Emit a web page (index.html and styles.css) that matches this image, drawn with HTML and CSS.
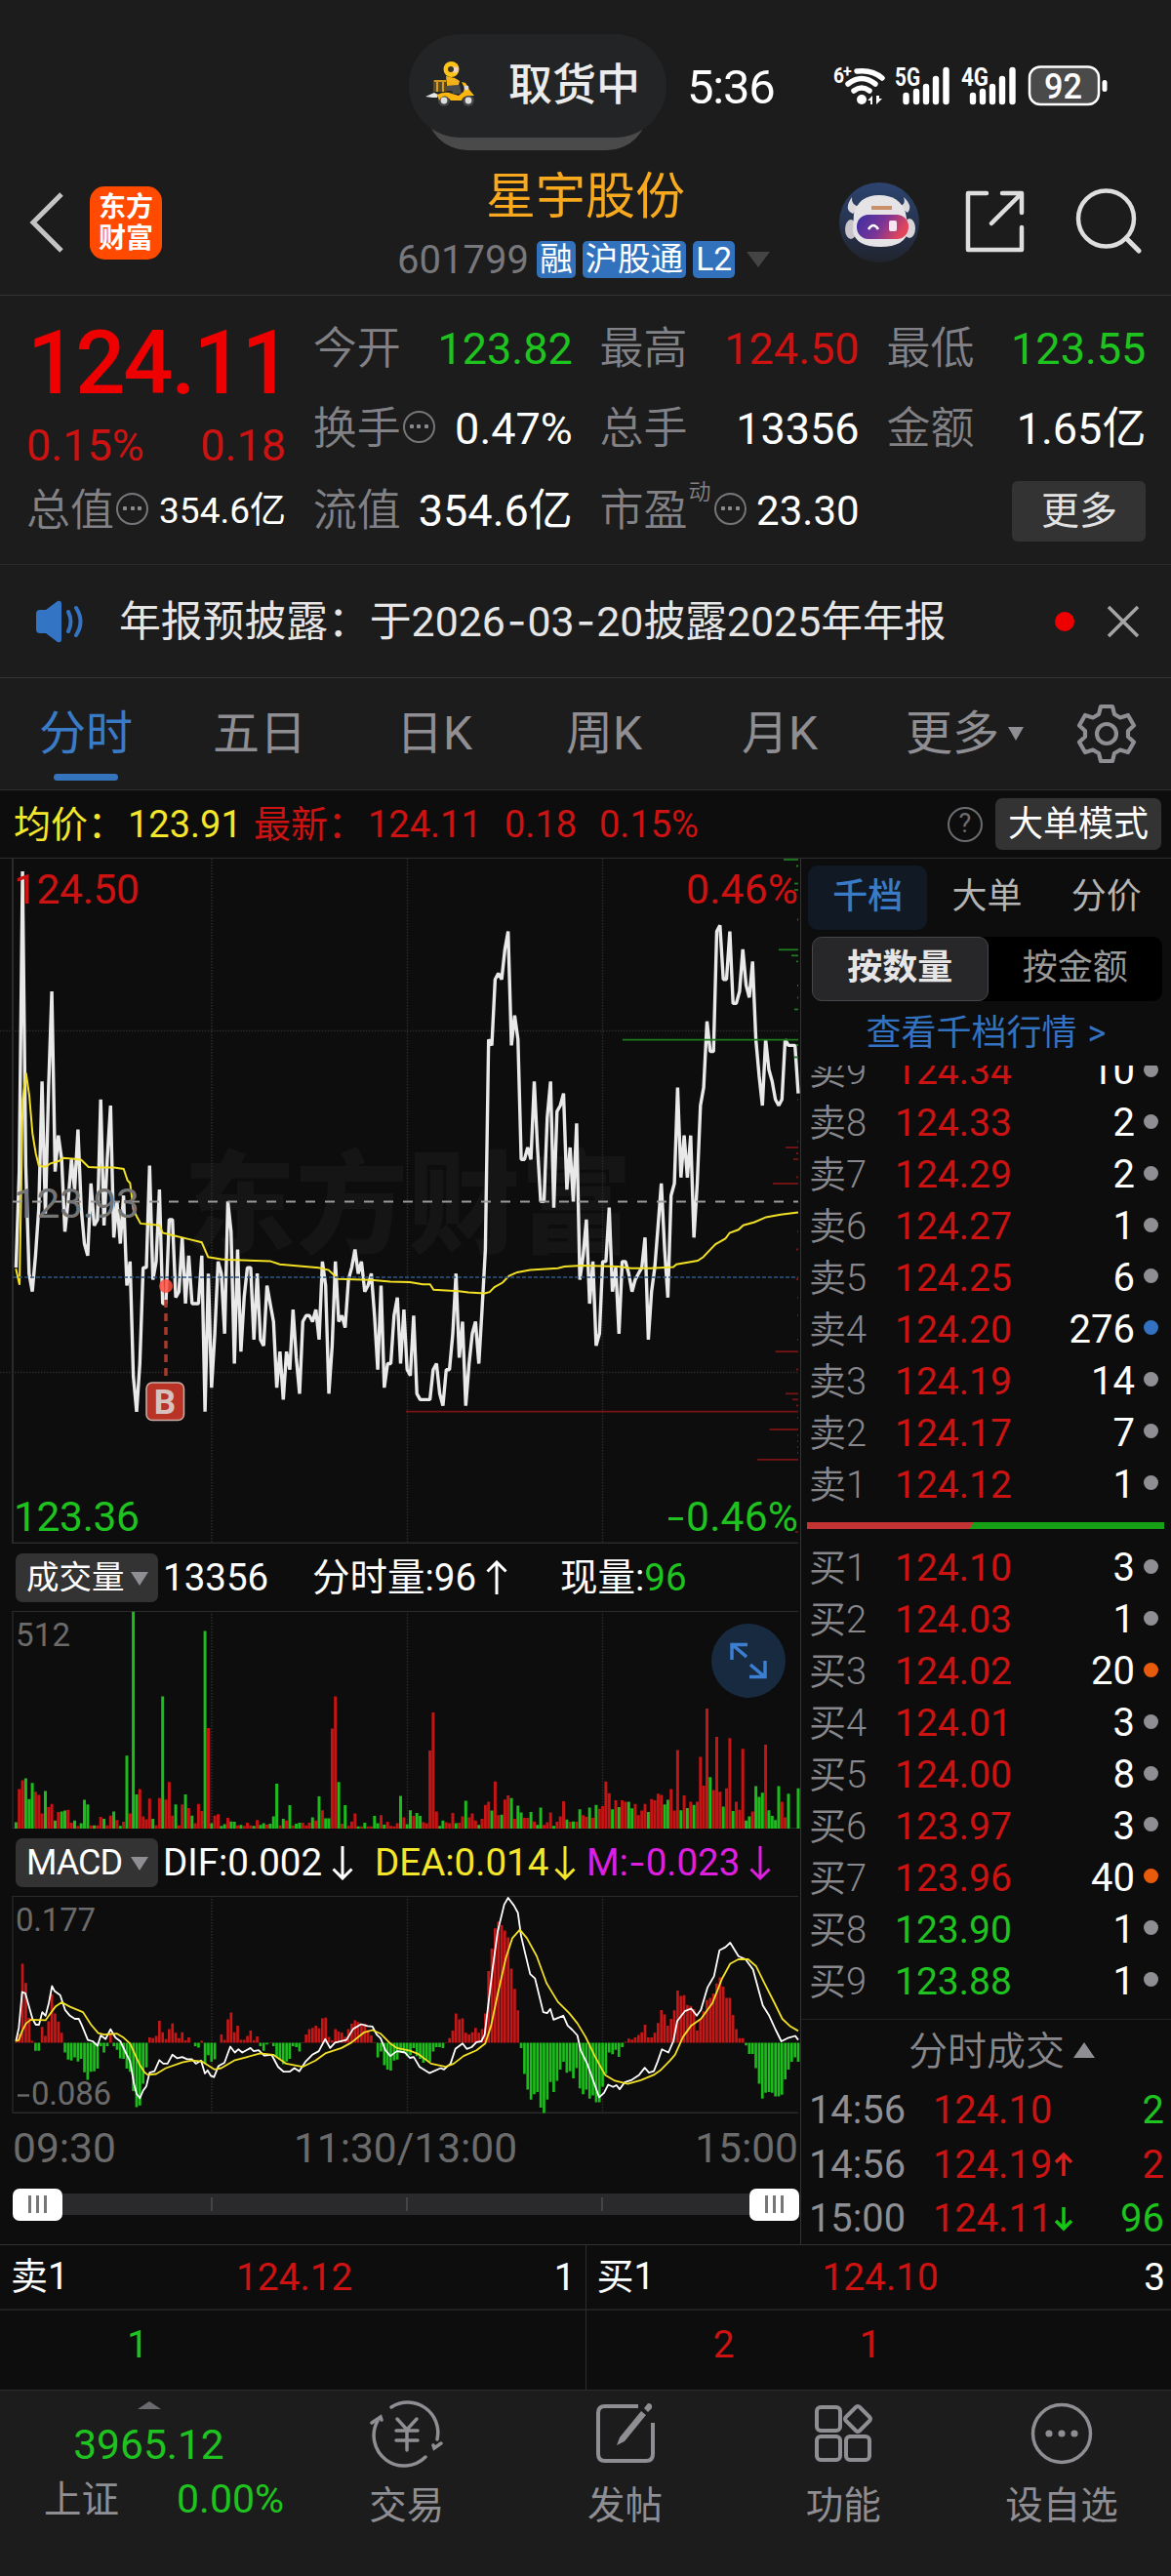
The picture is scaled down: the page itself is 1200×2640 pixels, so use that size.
FILE: index.html
```html
<!DOCTYPE html>
<html lang="zh-CN">
<head>
<meta charset="utf-8">
<title>星宇股份 601799</title>
<link rel="stylesheet" href="styles.css">
</head>
<body>
<div class="app">
  <div class="status">
    <div class="island-wrap">
      <div class="island">
        <svg class="rider" width="54" height="50" viewBox="0 0 54 50">
          <path d="M1 36 L10 32 L14 34 L13 37 L8 37 Z" fill="#e6e6e6"/>
          <rect x="9" y="19" width="13" height="12" fill="#5a4a26"/><path d="M10 20h12M13 21v10M19 21v10" stroke="#f5b31a" stroke-width="1.6"/>
          <circle cx="20" cy="40" r="6" fill="#444"/><circle cx="20" cy="40" r="3.4" fill="#ddd"/>
          <circle cx="45" cy="40" r="6" fill="#444"/><circle cx="45" cy="40" r="3.4" fill="#ddd"/>
          <path d="M13 34 Q22 30 28 33 L35 35 L40 31 L41 27 L38 21 L42 22 L46 29 L51 35 L44 35 Q39 36 38 40 L27 40 Q20 31 15 40 Z" fill="#fbb60f"/>
          <path d="M22 25 L36 24 L38 33 L29 33 L28 30 L22 30 Z" fill="#4b4b4b"/>
          <path d="M22 15 L31 17 L36 20 L35 24 L23 25 Z" fill="#f2b21a"/>
          <circle cx="27.500" cy="8" r="8" fill="#fcc419"/><path d="M27 5 L35 6 L33 12 L28 11 Z" fill="#f0d2bd"/><circle cx="27" cy="8" r="3" fill="#3a3328"/>
          <circle cx="43" cy="27" r="2.400" fill="#ddd"/>
        </svg>
        <span>取货中</span>
      </div>
    </div>
    <div class="clock">5:36</div>
    <svg class="signals" width="300" height="50" viewBox="850 64 300 50">
      <g fill="none" stroke="#fff" stroke-width="5.500" stroke-linecap="round">
        <path d="M878 73 Q894 71 904 80"/><path d="M869 86 Q883 75 897 86"/><path d="M875 93 Q883 87 891 93"/>
      </g>
      <circle cx="883" cy="102" r="5" fill="#fff"/><path d="M889 103l5-5v9h-2v-4zM898 98v9l6-6h-3v-3z" fill="#fff"/>
      <g fill="#fff" font-family="Roboto" font-weight="700">
        <text x="854" y="85" font-size="22" textLength="11" lengthAdjust="spacingAndGlyphs">6</text><text x="864" y="79" font-size="16">+</text>
        <text x="917" y="88" font-size="25" textLength="26" lengthAdjust="spacingAndGlyphs">5G</text>
        <text x="985" y="88" font-size="25" textLength="28" lengthAdjust="spacingAndGlyphs">4G</text>
      </g>
      <g stroke="#fff" stroke-width="6.400" stroke-linecap="round">
        <path d="M928.500 98v6M939 94v10M949 89v15M959 81v23M969.500 72v32"/>
        <path d="M997 98v6M1007 94v10M1017 89v15M1027 81v23M1037.500 72v32"/>
      </g>
      <rect x="1055" y="68.500" width="71" height="38.500" rx="11" fill="#4a4a4a" stroke="#fff" stroke-width="2.500"/>
      <rect x="1129.500" y="82" width="5" height="12" rx="2.500" fill="#fff"/>
      <text x="1070" y="101" font-family="Roboto" font-size="36" font-weight="500" fill="#fff" textLength="39" lengthAdjust="spacingAndGlyphs">92</text>
    </svg>
  </div>

  <header class="head">
    <svg class="back" width="40" height="64" viewBox="0 0 40 64"><path d="M36 3 L7 32 L36 61" fill="none" stroke="#c4c4c4" stroke-width="5"/></svg>
    <div class="logo"><span>东方</span><span>财富</span></div>
    <div class="title">
      <div class="name">星宇股份</div>
      <div class="code"><span class="num">601799</span><b>融</b><b>沪股通</b><b>L2</b><i class="tri"></i></div>
    </div>
    <svg class="robot" width="82" height="82" viewBox="0 0 82 82">
      <defs>
        <linearGradient id="sky" x1="0" y1="0" x2="0" y2="1"><stop offset="0" stop-color="#2d4470"/><stop offset="1" stop-color="#20242e"/></linearGradient>
        <linearGradient id="visor" x1="0" y1="0" x2="1" y2=".3"><stop offset="0" stop-color="#3a2fa4"/><stop offset=".55" stop-color="#7a3597"/><stop offset="1" stop-color="#e0455c"/></linearGradient>
      </defs>
      <circle cx="41" cy="41" r="41" fill="url(#sky)"/>
      <path d="M13 15 Q4 28 14 32 L22 25 Q12 24 13 15Z M66 15 Q76 24 70 31 L60 24 Q69 24 66 15Z" fill="#dcd9dd"/>
      <ellipse cx="12" cy="48" rx="6" ry="10" fill="#c9c6cb"/><ellipse cx="72" cy="47" rx="6" ry="10" fill="#d8d5d9"/>
      <path d="M15 32 Q20 13 41 13 Q62 13 68 31 L71 49 Q68 66 42 66 Q17 66 14 50Z" fill="#e6e3e6"/>
      <path d="M33 26h21" stroke="#c9906a" stroke-width="4"/>
      <rect x="18" y="33" width="53" height="25" rx="12" fill="url(#visor)"/>
      <path d="M30 48q5-8 10 0" fill="none" stroke="#fff" stroke-width="2.500"/><rect x="51" y="39" width="8" height="11" rx="2" fill="#f7e6f2"/>
    </svg>
    <svg class="share" width="70" height="70" viewBox="0 0 70 70"><path d="M26 6 H7 V64 H62 V41 M42 6 H62 V26 M61 7 L31 37" fill="none" stroke="#dedede" stroke-width="4.500" stroke-linecap="round" stroke-linejoin="round"/></svg>
    <svg class="search" width="70" height="70" viewBox="0 0 70 70"><circle cx="33.500" cy="32" r="28.500" fill="none" stroke="#dedede" stroke-width="4.500"/><path d="M54 52 L67 65" stroke="#dedede" stroke-width="5" stroke-linecap="round"/></svg>
  </header>

  <section class="quote">
    <div class="lead">
      <div class="price">124.11</div>
      <div class="pair red"><span>0.15%</span><span>0.18</span></div>
    </div>
    <div class="cell c2 r1"><span>今开</span><em class="green">123.82</em></div>
    <div class="cell c3 r1"><span>最高</span><em class="red">124.50</em></div>
    <div class="cell c4 r1"><span>最低</span><em class="green">123.55</em></div>
    <div class="cell c2 r2"><span>换手</span><i class="more"></i><em>0.47%</em></div>
    <div class="cell c3 r2"><span>总手</span><em>13356</em></div>
    <div class="cell c4 r2"><span>金额</span><em>1.65亿</em></div>
    <div class="cell c1 r3"><span>总值</span><i class="more"></i><em class="s37">354.6亿</em></div>
    <div class="cell c2 r3"><span>流值</span><em>354.6亿</em></div>
    <div class="cell c3 r3"><span>市盈</span><sup>动</sup><i class="more"></i><em class="s42">23.30</em></div>
    <div class="cell c4 r3"><button class="btn-more">更多</button></div>
  </section>

  <section class="notice">
    <svg width="50" height="44" viewBox="0 0 50 44"><path d="M0 14 Q0 10 4 10 H10 L22 1 Q26 0 26 4 V40 Q26 44 22 43 L10 34 H4 Q0 34 0 30Z" fill="#3474c4"/><path d="M33 12 Q38 22 33 32 M41 8 Q50 22 41 36" fill="none" stroke="#3474c4" stroke-width="4" stroke-linecap="round"/></svg>
    <p>年报预披露：于2026<span class="dash">-</span>03<span class="dash">-</span>20披露2025年年报</p>
    <i class="dot"></i>
    <svg class="close" width="34" height="34" viewBox="0 0 34 34"><path d="M2 2 L32 32 M32 2 L2 32" stroke="#a5a5a5" stroke-width="3.500"/></svg>
  </section>

  <nav class="tabs">
    <span class="on">分时</span><span>五日</span><span>日K</span><span>周K</span><span>月K</span><span>更多<i class="tri"></i></span>
    <svg width="62" height="62" viewBox="0 0 62 62"><g fill="none" stroke="#8e8e93" stroke-width="4.200" stroke-linejoin="round"><path d="M25 3 H37 L39 11 L45 14.500 L53 12 L59 22.500 L53 28 V34 L59 39.500 L53 50 L45 47.500 L39 51 L37 59 H25 L23 51 L17 47.500 L9 50 L3 39.500 L9 34 V28 L3 22.500 L9 12 L17 14.500 L23 11Z"/><circle cx="31" cy="31" r="10"/></g></svg>
  </nav>

  <div class="avg">
    <span class="yellow k">均价：</span><span class="yellow v1">123.91</span><span class="red k">最新：</span><span class="red v2">124.11</span><span class="red v3">0.18</span><span class="red v4">0.15%</span>
    <i class="help">?</i><button>大单模式</button>
  </div>

  <main class="main">
    <div class="charts">
      <svg class="price-chart" width="820" height="702" viewBox="0 880 820 702">
        <text x="188" y="1275" class="mark" textLength="460" lengthAdjust="spacingAndGlyphs">东方财富</text>
        <path d="M0 1056.500H818M0 1406.500H818" class="grid"/>
        <path d="M217 880V1582M417.500 880V1582M617.500 880V1582" class="grid"/>
        <path d="M13 880V1581.500H818" class="frame"/>
        <path id="price-line" class="price-line"/>
        <path id="avg-line" class="avg-line"/>
        <path d="M13 1231.500H818" stroke="#9a9a9a" stroke-width="1.800" stroke-dasharray="10 10"/>
        <path d="M13 1309H818" stroke="#2f5688" stroke-width="1.500" stroke-dasharray="4 2"/>
        <g id="levels"></g>
        <path d="M170 1332V1416" stroke="#a8392f" stroke-width="3.500" stroke-dasharray="8 6"/>
        <circle cx="170" cy="1318" r="7" fill="#ff5040" opacity=".85"/>
        <rect x="150" y="1417" width="38.500" height="38.500" rx="6" fill="#b93426" stroke="#cbb0aa" stroke-width="1.500"/>
        <text x="169" y="1449" class="bmark" text-anchor="middle">B</text>
        <text x="14" y="926" class="t42 fr" textLength="129">124.50</text>
        <text x="14" y="1569" class="t42 fg" textLength="129">123.36</text>
        <text x="14" y="1248" class="t42 fx" textLength="129">123.93</text>
        <text x="818" y="926" class="t42 fr" text-anchor="end" textLength="115">0.46%</text>
        <text x="818" y="1569" class="t42 fg" text-anchor="end" textLength="115">0.46%</text><path d="M685 1556.500h15" stroke="#1fc31f" stroke-width="3"/>
      </svg>
      <div class="ind"><button>成交量<i class="tri"></i></button><span class="a1">13356</span><span class="a2">分时量:96<svg width="22" height="36" viewBox="0 0 22 36"><path d="M11 35V2M1.500 11.500L11 2L20.500 11.500" /></svg></span><span class="a3">现量:<b class="green">96</b></span></div>
      <div class="panel">
        <svg width="820" height="223" viewBox="0 1651 820 223">
          <path d="M13 1874V1651.500H818" class="frame thin"/><path d="M13 1873.500H818" class="frame thin"/>
          <path d="M217 1651V1874M417.500 1651V1874M617.500 1651V1874" class="grid"/>
          <path id="vol-up" fill="#c41414"/><path id="vol-down" fill="#1cbc1c"/>
          <text x="16" y="1687" class="t33" textLength="56">512</text>
        </svg>
        <div class="expand"><svg width="40" height="40" viewBox="0 0 40 40"><path d="M3 19V3.500H19M4 4L18 16M22 24L36 36M37 20V36.500H21" fill="none" stroke="#3c7fd0" stroke-width="3.500"/></svg></div>
      </div>
      <div class="ind macd"><button>MACD<i class="tri"></i></button><span class="a1">DIF:0.002<svg width="22" height="36" viewBox="0 0 22 36"><path d="M11 1V34M1.500 24.500L11 34L20.500 24.500"/></svg></span><span class="b2 yellow">DEA:0.014<svg width="22" height="36" viewBox="0 0 22 36"><path d="M11 1V34M1.500 24.500L11 34L20.500 24.500"/></svg></span><span class="b3">M:<span class="dash">-</span>0.023<svg width="22" height="36" viewBox="0 0 22 36"><path d="M11 1V34M1.500 24.500L11 34L20.500 24.500"/></svg></span></div>
      <svg width="820" height="223" viewBox="0 1943 820 223">
        <path d="M13 2166V1943.500H818" class="frame thin"/><path d="M13 2165.500H818" class="frame"/>
        <path d="M217 1943V2166M417.500 1943V2166M617.500 1943V2166" class="grid"/>
        <path id="macd-up" fill="#c41818"/><path id="macd-down" fill="#1cbc1c"/>
        <path id="dif" class="thinline" stroke="#fff"/><path id="dea" class="thinline" stroke="#f2e024"/>
        <text x="16" y="1979" class="t33" textLength="82">0.177</text>
        <path d="M18 2147.500h12" stroke="#6b6b6b" stroke-width="2.400"/><text x="32" y="2157" class="t33" textLength="82">0.086</text>
      </svg>
      <div class="times"><span>09:30</span><span>11:30/13:00</span><span>15:00</span></div>
      <div class="slider"><i class="knob"><u></u><u></u><u></u></i><i class="track"><s></s><s></s><s></s></i><i class="knob"><u></u><u></u><u></u></i></div>
    </div>

    <aside class="book">
      <div class="btabs"><span class="on">千档</span><span>大单</span><span>分价</span></div>
      <div class="seg"><span class="on">按数量</span><span>按金额</span></div>
      <div class="link">查看千档行情 &gt;</div>
      <div class="rows asks">
        <div class="row"><span>卖9</span><em>124.34</em><b>10</b><i></i></div>
        <div class="row"><span>卖8</span><em>124.33</em><b>2</b><i></i></div>
        <div class="row"><span>卖7</span><em>124.29</em><b>2</b><i></i></div>
        <div class="row"><span>卖6</span><em>124.27</em><b>1</b><i></i></div>
        <div class="row"><span>卖5</span><em>124.25</em><b>6</b><i></i></div>
        <div class="row"><span>卖4</span><em>124.20</em><b>276</b><i class="blue"></i></div>
        <div class="row"><span>卖3</span><em>124.19</em><b>14</b><i></i></div>
        <div class="row"><span>卖2</span><em>124.17</em><b>7</b><i></i></div>
        <div class="row"><span>卖1</span><em>124.12</em><b>1</b><i></i></div>
      </div>
      <div class="ratio"></div>
      <div class="rows">
        <div class="row"><span>买1</span><em>124.10</em><b>3</b><i></i></div>
        <div class="row"><span>买2</span><em>124.03</em><b>1</b><i></i></div>
        <div class="row"><span>买3</span><em>124.02</em><b>20</b><i class="orange"></i></div>
        <div class="row"><span>买4</span><em>124.01</em><b>3</b><i></i></div>
        <div class="row"><span>买5</span><em>124.00</em><b>8</b><i></i></div>
        <div class="row"><span>买6</span><em>123.97</em><b>3</b><i></i></div>
        <div class="row"><span>买7</span><em>123.96</em><b>40</b><i class="orange"></i></div>
        <div class="row"><span>买8</span><em class="green">123.90</em><b>1</b><i></i></div>
        <div class="row"><span>买9</span><em class="green">123.88</em><b>1</b><i></i></div>
      </div>
      <div class="deals">
        <div class="dh">分时成交<i></i></div>
        <div class="deal"><span>14:56</span><em>124.10</em><b class="green">2</b></div>
        <div class="deal"><span>14:56</span><em>124.19<svg width="18" height="26" viewBox="0 0 18 26"><path d="M9 25V3M1 11L9 3L17 11" fill="none" stroke="#e01f1f" stroke-width="3.500"/></svg></em><b class="red">2</b></div>
        <div class="deal"><span>15:00</span><em>124.11<svg width="18" height="26" viewBox="0 0 18 26"><path d="M9 1V23M1 15L9 23L17 15" fill="none" stroke="#14c814" stroke-width="3.500"/></svg></em><b class="green">96</b></div>
      </div>
    </aside>
  </main>

  <section class="depth">
    <div class="side"><div class="top"><span>卖1</span><em>124.12</em><b>1</b></div><div class="queue green"><span>1</span></div></div>
    <div class="side"><div class="top"><span>买1</span><em>124.10</em><b>3</b></div><div class="queue red"><span>2</span><span>1</span></div></div>
  </section>

  <footer class="foot">
    <div class="index"><i class="up"></i><div class="val">3965.12</div><div class="sub"><span>上证</span><em>0.00%</em></div></div>
    <div class="item"><svg width="76" height="70" viewBox="0 0 76 70"><g fill="none" stroke="#8e8e93" stroke-width="3.500" stroke-linecap="round"><path d="M22 8 A31 31 0 0 1 69 41"/><path d="M57 59 A31 31 0 0 1 8 22"/><path d="M2 24 L11 18 L12 21 M73 45 L66 50 L65 47"/><path d="M28 20 L38 31 L48 20 M38 31 V52 M27 32H49M27 42H49"/></g></svg><span>交易</span></div>
    <div class="item"><svg width="76" height="70" viewBox="0 0 76 70"><g fill="none" stroke="#8e8e93" stroke-width="4"><path d="M51 7 H17 Q10 7 10 14 V56 Q10 63 17 63 H59 Q66 63 66 56 V24"/><path d="M29 47 L32 39 L54 12 L59 16 L37 43Z M57 9 L61 4 Q66 4 65 9 L61 13Z" fill="#8e8e93" stroke="none"/></g></svg><span>发帖</span></div>
    <div class="item"><svg width="76" height="70" viewBox="0 0 76 70"><g fill="none" stroke="#8e8e93" stroke-width="4"><rect x="11" y="8" width="24" height="24" rx="4"/><rect x="11" y="38" width="24" height="24" rx="4"/><rect x="41" y="38" width="24" height="24" rx="4"/><path d="M51 8 Q53 6 55 8 L65 18 Q67 20 65 22 L55 32 Q53 34 51 32 L41 22 Q39 20 41 18Z"/></g></svg><span>功能</span></div>
    <div class="item"><svg width="76" height="70" viewBox="0 0 76 70"><circle cx="38" cy="35" r="29.500" fill="none" stroke="#8e8e93" stroke-width="3.500"/><g fill="#8e8e93"><circle cx="25" cy="35" r="3.600"/><circle cx="38" cy="35" r="3.600"/><circle cx="51" cy="35" r="3.600"/></g></svg><span>设自选</span></div>
  </footer>
</div>
<script src="charts.js"></script>
</body>
</html>
```
FILE: styles.css
```css
* { box-sizing: border-box; margin: 0; padding: 0; }
body { background: #1c1c1c; color: #fff; font-family: Roboto, "Noto Sans CJK SC", sans-serif; }
em, i { font-style: normal; }
i, s, u { display: block; text-decoration: none; }
button { border: 0; color: #fff; font-family: inherit; }
svg { flex: none; display: block; }
.app { width: 1200px; height: 2640px; overflow: hidden; white-space: nowrap; }
.red { color: #cd1212; }
.green { color: #1fc31f; }
.yellow { color: #f4e62a; }
.dash { font-family: Inter, sans-serif; }
.tri { width: 0; height: 0; border-style: solid; border-color: #8e8e93 transparent transparent; }

.status { height: 154px; padding: 35px 0 0 419px; display: flex; }
.island-wrap { width: 264px; height: 119px; position: relative; }
.island-wrap::before { content: ""; position: absolute; left: 18px; right: 19px; bottom: 0; height: 84px; border-radius: 42px; background: #4a4a4a; }
.island { position: relative; height: 106px; border-radius: 53px; background: #232426; display: flex; align-items: center; padding-left: 16px; font-size: 45px; font-weight: 500; color: #ececec; }
.island span { margin-left: 32px; line-height: 110px; }
.clock { width: 92px; margin-left: 21px; font-size: 49px; line-height: 110px; letter-spacing: -1.200px; }
.signals { margin: 29px 0 0 54px; }

.head { height: 149px; border-bottom: 1px solid #343434; display: flex; align-items: flex-start; }
.back { margin: 42px 0 0 27px; }
.logo { margin: 37px 0 0 25px; width: 74px; height: 75px; border-radius: 15px; background: #ff4a00; display: flex; flex-direction: column; align-items: center; justify-content: center; font-size: 28px; line-height: 32px; font-weight: 700; }
.title { margin-left: 241px; width: 382px; }
.name { padding-left: 91px; margin-top: 17px; font-size: 51px; line-height: 62px; color: #f8a91d; }
.code { display: flex; align-items: center; height: 38px; margin-top: 14px; }
.code .num { width: 144px; color: #77777c; font-size: 40px; }
.code b { height: 38px; margin-right: 7px; padding: 0 3px; border-radius: 5px; background: #3272bd; font-size: 33.500px; line-height: 38px; font-weight: 400; }
.code .tri { border-width: 16px 12px 0; border-top-color: #444; margin-left: 5px; }
.robot { margin: 33px 0 0 71px; }
.share { margin: 38px 0 0 43px; }
.search { margin: 38px 0 0 45px; }

.quote { height: 276px; border-bottom: 1px solid #2a2a2a; padding: 14px 26px 0 27px; display: grid; grid-template: 82px 84px 82px / 266px 266px 266px 266px; column-gap: 27.800px; font-size: 45px; }
.lead { grid-area: 1 / 1 / 3 / 2; }
.price { height: 110px; padding-left: 1px; font-size: 90px; line-height: 112px; font-weight: 500; color: #ef0000; letter-spacing: -2px; }
.pair { display: flex; justify-content: space-between; line-height: 60px; }
.cell { display: flex; align-items: center; height: 82px; line-height: 86px; }
.cell span, .cell sup { color: #828286; font-weight: 350; }
.cell em { margin-left: auto; }
.c1 { grid-column: 1; } .c2 { grid-column: 2; } .c3 { grid-column: 3; } .c4 { grid-column: 4; }
.r1 { grid-row: 1; } .r2 { grid-row: 2; } .r3 { grid-row: 3; }
.cell sup { font-size: 23px; align-self: flex-start; line-height: 30px; margin: 7px 1px 0 1px; }
.cell .more { width: 33px; height: 33px; margin: -6px 0 0 2px; border: 2px solid #76767a; border-radius: 50%; background: radial-gradient(circle, #8a8a8e 2px, transparent 2.500px) center / 8px 8px no-repeat, radial-gradient(circle, #8a8a8e 2px, transparent 2.500px) 3px 50% / 8px 8px no-repeat, radial-gradient(circle, #8a8a8e 2px, transparent 2.500px) 18px 50% / 8px 8px no-repeat; }
.cell .s37 { font-size: 37px; }
.cell .s42 { font-size: 42px; }
.btn-more { width: 137px; height: 62px; margin-left: auto; border-radius: 6px; background: #333; color: #e2e2e2; font-size: 39px; line-height: 58px; }

.notice { height: 116px; border-bottom: 1px solid #343434; padding: 0 32px 0 37px; display: flex; align-items: center; color: #e6e6e6; font-size: 42.800px; }
.notice p { width: 920px; margin-left: 35px; line-height: 112px; }
.notice p .dash { margin: 0 1px 0 2px; }
.notice .dot { width: 20px; height: 20px; margin-left: 39px; border-radius: 50%; background: #ee0000; }
.notice .close { margin-left: auto; }

.tabs { height: 115px; border-bottom: 1px solid #2e2e2e; display: flex; align-items: center; padding-left: 40px; color: #8e8e93; font-size: 48px; line-height: 116px; }
.tabs span { width: 178px; flex: none; position: relative; }
.tabs span:nth-child(2) { width: 188px; }
.tabs span:nth-child(3) { width: 174px; }
.tabs span:nth-child(4) { width: 180px; }
.tabs span:nth-child(5) { width: 168px; }
.tabs .on { color: #3a7bc8; }
.tabs .on::after { content: ""; position: absolute; left: 15px; bottom: 10px; width: 66px; height: 7px; border-radius: 4px; background: #3474bc; }
.tabs span:nth-child(6) { display: flex; align-items: center; width: 175px; }
.tabs .tri { border-width: 14px 8px 0; margin-left: 9px; }

.avg { height: 70px; border-bottom: 1px solid #2c2c2c; background: #0d0d0d; display: flex; align-items: center; padding: 0 10px 0 14px; font-size: 38px; line-height: 68px; }
.avg .k { width: 117px; }
.avg .v1 { width: 129px; }
.avg .v2 { width: 140px; }
.avg .v3 { width: 97px; }
.avg .help { width: 36px; height: 36px; margin-left: auto; margin-right: 13px; border: 2.500px solid #6c6c70; border-radius: 50%; color: #6c6c70; text-align: center; font-size: 27px; line-height: 31px; }
.avg button { width: 170px; height: 53px; border-radius: 7px; background: #333; font-size: 36px; line-height: 52px; }

.main { height: 1420px; background: #0d0d0d; display: flex; }
.charts { width: 820px; flex: none; }
.grid { fill: none; stroke: #2b2b2b; stroke-width: 1.500; stroke-dasharray: 1.500 1.500; }
.frame { fill: none; stroke: #2b2b2b; stroke-width: 2; }
.thin { stroke-width: 1.200; }
.mark { font: 900 114px "Noto Sans CJK SC"; fill: #151515; }
.price-line { fill: none; stroke: #e9e9e9; stroke-width: 3.400; stroke-linejoin: bevel; }
.avg-line { fill: none; stroke: #f2e024; stroke-width: 2; }
.thinline { fill: none; stroke-width: 1.800; stroke-linejoin: round; }
.t42 { font-size: 42.500px; }
.t33 { font-size: 33px; fill: #6b6b6b; }
.fr { fill: #cd1212; } .fg { fill: #1fc31f; } .fx { fill: #757575; }
.bmark { font: 700 35px Roboto; fill: #d8c2bf; }
.ind { height: 69px; display: flex; align-items: center; padding-left: 16px; font-size: 38.500px; line-height: 71px; }
.ind button { width: 146px; height: 50px; margin-right: 5px; padding-left: 11px; border-radius: 7px; background: #333; display: flex; align-items: center; font-size: 33.500px; line-height: 46px; }
.ind .tri { border-width: 14px 9px 0; margin: 2px 10px 0 auto; }
.macd button { font-size: 36px; letter-spacing: -1px; }
.ind span { display: flex; align-items: center; flex: none; }
.ind svg { margin-left: 10px; }
.ind svg path { fill: none; stroke: currentColor; stroke-width: 3; }
.ind b { font-weight: 400; }
.ind .a1 { width: 153px; }
.ind .a2 { width: 254px; }
.macd .a1 { width: 217px; }
.macd .b2 { width: 217px; }
.macd .b2 svg { margin-left: 6px; }
.macd .b3 { color: #df1fdf; }
.panel { position: relative; }
.expand { position: absolute; left: 729px; top: 13px; width: 76px; height: 76px; border-radius: 50%; background: #182a40; display: flex; align-items: center; justify-content: center; }
.times { height: 70px; display: flex; justify-content: space-between; padding: 0 2px 0 13px; font-size: 42.500px; line-height: 71px; color: #6b6b6b; }
.slider { height: 46px; margin-left: 13px; width: 806px; display: flex; align-items: center; }
.knob { width: 51px; height: 33px; border-radius: 7px; background: #fff; display: flex; align-items: center; justify-content: center; gap: 5px; }
.knob u { width: 3px; height: 18px; background: #777; }
.track { flex: 1; height: 22px; background: #2a2a2c; display: flex; align-items: center; justify-content: space-between; padding: 0 150px 0 152px; }
.track s { width: 2px; height: 14px; background: #444; }

.book { width: 380px; border-left: 1.500px solid #333; }
.btabs { height: 66px; margin: 7px 5px 0 7px; display: flex; font-size: 36px; line-height: 65px; color: #b4b4b4; text-align: center; }
.btabs span { flex: 1; }
.btabs .on { background: #111a24; border-radius: 10px; color: #3a7bc8; font-weight: 500; }
.seg { height: 66px; margin: 7px 9px 0 11px; background: #000; border-radius: 10px; display: flex; font-size: 36px; line-height: 65px; color: #999; text-align: center; }
.seg span { flex: 1; }
.seg .on { border: 1.500px solid #47474b; border-radius: 10px; background: #27272a; color: #e6e6e6; font-weight: 700; line-height: 62px; }
.link { height: 66px; line-height: 67px; text-align: center; color: #3272c0; font-size: 36px; word-spacing: 2px; }
.rows { height: 486px; }
.asks { height: 468px; overflow: hidden; display: flex; flex-direction: column; justify-content: flex-end; padding-bottom: 12px; }
.row { height: 52.900px; flex: none; display: flex; align-items: center; padding: 0 13px 0 8px; font-size: 39px; line-height: 54px; }
.row span { width: 88px; color: #88888c; font-weight: 350; font-size: 38px; }
.row em { width: 120px; color: #cd1212; }
.row em.green { color: #1fc31f; }
.row b, .deal b { margin-left: auto; font-weight: 400; font-size: 40px; }
.row i { width: 15px; height: 15px; margin: -4px 0 0 9px; border-radius: 50%; background: #8e8e93; }
.row .blue { background: #3272c0; }
.row .orange { background: #e85a0c; }
.ratio { height: 7px; margin: 0 7px 14px 6px; background: linear-gradient(120deg, #c33333 46%, #16a016 46.300%); }
.deals { margin-top: 2px; border-top: 1px solid #232325; }
.dh { height: 65px; display: flex; align-items: center; padding-left: 110px; font-size: 40px; line-height: 60px; color: #88888c; font-weight: 350; }
.dh i { border: solid transparent; border-width: 0 11.500px 16px; border-bottom-color: #8e8e93; margin-left: 9px; margin-top: -4px; }
.deal { height: 55.500px; display: flex; align-items: center; padding: 0 7px 0 8px; font-size: 39.800px; line-height: 55px; }
.deal span { width: 127px; color: #8e8e93; }
.deal em { display: flex; align-items: center; color: #cd1212; }
.deal svg { margin-left: 3px; }

.depth { height: 150px; border-top: 1.500px solid #333; border-bottom: 1.500px solid #2c2c2c; background: #0d0d0d; display: flex; font-size: 38.800px; }
.side { flex: 1; }
.side + .side { border-left: 1px solid #2c2c2c; }
.top { height: 67px; padding: 0 10px 0 11px; border-bottom: 2px solid #202020; display: flex; align-items: center; line-height: 69px; }
.side + .side .top { padding-right: 6px; }
.top span { width: 231px; font-size: 38px; }
.top em { color: #cd1212; }
.top b { margin-left: auto; font-weight: 400; }
.queue { display: flex; line-height: 70px; }
.queue span { width: 150px; text-align: right; }
.queue span:first-child { width: 152px; }

.foot { height: 190px; display: flex; color: #8e8e93; font-size: 38.500px; }
.index { width: 305px; padding-top: 11px; display: flex; flex-direction: column; align-items: center; }
.up { border: solid transparent; border-width: 0 12px 8px; border-bottom-color: #6b6b6f; }
.val { height: 60px; margin-top: 6px; line-height: 62px; font-size: 42.500px; color: #1fc31f; }
.sub { display: flex; width: 246px; margin-left: 31px; justify-content: space-between; line-height: 53px; }
.sub em { color: #1fc31f; font-size: 41px; }
.item { width: 223.750px; padding-top: 9px; display: flex; flex-direction: column; align-items: center; }
.item span { line-height: 77px; }
```
FILE: charts.js
```js
// Minute series for the session: 241 points from 09:30 to 15:00.
const X0 = 16.4, STEP = 3.34, K = 2.1778;
const xAt = i => (X0 + i * STEP).toFixed(1);

// Last price, in cents relative to the previous close.
const price = [-11,5,55,6,-12,-15,-9,-1,20,-2,19,35,5,11,7,-5,0,7,2,12,-1,-7,-9,3,-4,-3,17,-4,7,16,-6,0,-7,1,-14,-10,-29,-35,-27,-11,
-11,6,-13,-10,2,-17,-17,-3,-3,-16,-15,-6,-17,-9,-17,-17,-17,-9,-35,-12,-31,-22,-10,-12,-22,0,-5,-27,-8,-25,-16,-11,-11,-23,-12,-23,-24,-14,-17,-20,
-31,-25,-33,-25,-28,-18,-26,-32,-20,-19,-19,-20,-18,-23,-10,-14,-32,-24,-10,-20,-19,-21,-13,-11,-8,-12,-10,-15,-14,-12,-19,-28,-14,-31,-27,-27,-19,-16,-27,-18,
-28,-29,-19,-32,-33,-33,-33,-33,-28,-27,-32,-34,-28,-28,-22,-12,-26,-20,-34,-27,-22,-20,-27,-18,-8,27,26,37,38,37,42,45,26,31,27,7,7,9,7,20,
9,0,0,14,20,-1,15,16,18,2,9,0,13,-13,-9,-3,-17,-10,-24,-22,-10,-10,-1,-15,-11,-22,-10,-10,-12,-15,-13,-12,-11,-6,-23,-15,-11,-4,3,-8,
-16,1,3,19,4,11,4,11,-6,3,16,19,30,25,25,45,46,37,37,45,33,33,35,42,36,34,40,27,21,16,27,22,20,17,16,17,27,26,26,26,18];

// Traded volume per minute; positive = up minute, negative = down minute.
const volume = [-14,88,108,-112,-66,-102,82,75,34,-84,48,55,-18,37,-38,-40,42,13,-18,6,-12,-64,-54,7,-7,7,26,-22,7,29,-38,19,-6,15,-163,34,-484,-76,88,27,
21,67,-22,7,68,-295,65,104,29,-54,7,54,-76,46,-29,12,55,39,-441,224,-12,29,32,-6,-10,24,-16,-15,7,-8,6,13,7,-6,19,-8,-12,9,-11,-27,
-100,7,-22,18,-52,7,-11,-13,13,7,13,-25,18,-72,41,-23,-23,223,295,-104,11,-52,6,16,34,-5,5,-13,5,5,-28,-12,30,-9,15,6,5,12,-73,25,
-10,-41,28,-35,-28,14,12,174,259,38,-6,-18,14,12,35,-12,13,27,-62,25,34,18,-8,22,53,60,-40,105,30,-31,65,74,-68,22,-51,-36,24,24,-37,16,
-8,-47,8,14,36,-6,15,27,61,-20,15,-16,15,-43,30,26,-47,24,-53,44,50,105,79,-43,63,-48,63,60,-60,-45,55,30,40,55,-37,66,63,78,75,-54,
-64,88,40,175,-41,74,-46,60,-53,60,160,96,268,-115,86,205,82,-49,90,202,-39,60,42,178,-18,-27,38,-95,-71,-80,187,-41,-28,-19,-95,60,25,-78,0,0,-90];

// MACD histogram.
const macd = [2,20,176,133,55,4,-18,-18,35,15,48,108,65,47,22,-22,-38,-40,-33,-42,-36,-66,-83,-65,-64,-58,-8,-22,-8,22,-8,-16,-35,-36,-58,-65,-108,-144,-140,-92,
-55,12,10,15,49,23,8,30,43,22,10,23,5,12,0,-8,-11,4,-46,-28,-43,-37,0,18,6,52,67,23,38,6,6,15,27,5,14,-8,-18,-4,1,-8,
-32,-38,-48,-42,-36,-8,-10,-20,1,18,30,33,38,32,54,56,13,5,30,25,22,13,30,42,50,46,42,42,28,16,1,-33,-20,-50,-60,-62,-40,-38,-20,-22,
-30,-28,-12,-30,-36,-45,-40,-43,-20,-10,-10,-12,1,10,27,65,52,54,22,18,23,33,22,30,65,160,210,255,270,262,250,235,165,120,72,-12,-70,-105,-127,-115,
-110,-145,-157,-127,-88,-110,-85,-60,-43,-67,-64,-80,-57,-102,-115,-105,-125,-118,-133,-133,-98,-70,-22,-26,-16,-32,-10,2,9,7,12,17,23,40,12,12,22,44,73,63,
38,53,72,116,104,106,84,82,75,27,52,70,95,100,110,132,146,125,100,100,62,30,10,10,-6,-25,-25,-57,-92,-125,-112,-110,-112,-120,-120,-116,-82,-60,-43,-33,-43];

// Smooth lines as x,y samples.
const avg = [49,937,60,973,70,560,80,500,90,550,100,635,110,680,119,706,130,709,142,709,155,702,180,697,195,690,230,692,250,694,272,710,300,711,350,711,380,714,392,740,400,746,410,805,420,820,432,836,490,840,500,857,540,864,580,871,620,878,640,911,680,916,700,917,830,920,860,927,980,935,1010,940,1040,960,1140,962,1200,966,1260,967,1300,972,1322,972,1333,984,1410,987,1440,990,1490,992,1505,989,1520,978,1545,968,1565,953,1590,945,1630,940,1715,936,1735,932,1790,930,1900,932,1940,936,2000,936,2070,933,2080,927,2145,919,2162,911,2180,897,2200,882,2230,870,2243,857,2270,850,2285,840,2320,833,2355,822,2400,816,2454,811];
const dif = [49,1115,58,1085,68,1005,78,1008,100,1065,110,1078,120,1078,130,1050,140,1058,150,1030,160,992,168,1003,185,1012,200,1045,215,1058,230,1065,242,1065,252,1080,270,1112,285,1115,300,1125,310,1102,325,1110,340,1088,355,1107,370,1115,385,1138,400,1160,412,1210,420,1232,430,1242,440,1225,450,1215,460,1185,475,1182,490,1157,502,1165,515,1165,530,1145,545,1153,560,1150,575,1155,590,1155,602,1165,618,1158,630,1187,638,1180,648,1192,658,1195,672,1170,690,1163,708,1127,722,1140,733,1133,745,1140,770,1130,780,1137,795,1135,812,1147,835,1145,855,1172,872,1183,890,1183,905,1175,920,1182,940,1160,960,1145,980,1137,1000,1110,1015,1130,1030,1118,1065,1112,1085,1088,1110,1077,1130,1081,1145,1082,1158,1100,1170,1108,1185,1135,1200,1148,1220,1137,1245,1140,1260,1152,1272,1150,1290,1172,1320,1186,1355,1175,1365,1178,1385,1165,1400,1132,1422,1120,1435,1132,1450,1128,1465,1117,1480,1115,1490,1100,1500,1040,1515,950,1530,870,1550,810,1562,795,1580,812,1592,828,1602,880,1615,920,1630,965,1645,975,1670,1050,1682,1052,1692,1043,1702,1067,1732,1058,1745,1080,1760,1090,1775,1102,1785,1135,1805,1165,1820,1195,1842,1240,1857,1230,1870,1212,1885,1217,1895,1213,1905,1222,1920,1207,1940,1202,1965,1190,1982,1174,1995,1185,2010,1182,2022,1160,2035,1133,2055,1140,2070,1115,2082,1070,2105,1048,2125,1042,2142,1058,2155,1045,2175,995,2195,970,2212,912,2230,905,2245,895,2270,925,2292,932,2315,955,2330,995,2345,1035,2365,1058,2385,1090,2402,1115,2425,1107,2445,1103,2454,1112];
const dea = [49,1115,58,1112,68,1092,80,1075,95,1067,140,1068,150,1058,170,1038,190,1028,215,1038,255,1050,280,1078,302,1097,320,1100,360,1098,380,1107,400,1120,430,1168,445,1185,455,1190,480,1188,510,1175,560,1162,590,1158,620,1160,660,1178,680,1175,720,1158,760,1150,800,1142,840,1145,880,1165,930,1172,970,1158,1000,1142,1050,1130,1080,1118,1120,1095,1145,1090,1170,1098,1200,1120,1220,1130,1260,1136,1285,1143,1325,1165,1370,1172,1395,1165,1425,1148,1465,1135,1492,1120,1510,1080,1530,1010,1555,930,1575,885,1598,866,1620,885,1650,925,1680,985,1715,1027,1750,1052,1775,1075,1800,1105,1830,1150,1860,1190,1890,1203,1930,1210,1970,1202,2010,1190,2030,1180,2060,1158,2075,1145,2100,1105,2125,1080,2155,1065,2190,1030,2220,975,2245,942,2270,932,2300,932,2325,948,2350,985,2380,1028,2405,1065,2430,1082,2454,1092];

const set = (id, d) => document.getElementById(id).setAttribute('d', d);
const trace = (pts, top) => {
  let d = '';
  for (let i = 0; i < pts.length; i += 2) d += (i ? 'L' : 'M') + (pts[i] / 3).toFixed(1) + ' ' + (top + pts[i + 1] / K).toFixed(1);
  return d;
};
set('price-line', price.map((v, i) => (i ? 'L' : 'M') + xAt(i) + ' ' + (1231.4 - v * 6.153).toFixed(1)).join(''));
set('avg-line', trace(avg, 870));
set('dif', trace(dif, 1580));
set('dea', trace(dea, 1580));

const bars = (data, base, sign, width, signed) => data.map((v, i) => {
  if (v * sign <= 0) return '';
  const h = Math.abs(v) / K, x = X0 + i * STEP - width / 2;
  const y = signed && v < 0 ? base : base - h;
  return `M${x.toFixed(1)} ${y.toFixed(1)}h${width}v${h.toFixed(1)}h-${width}z`;
}).join('');
set('vol-up', bars(volume, 1874, 1, 3, false));
set('vol-down', bars(volume, 1874, -1, 3, false));
set('macd-up', bars(macd, 2093.4, 1, 2.7, true));
set('macd-down', bars(macd, 2093.4, -1, 2.7, true));

// Price distribution ticks along the right edge: [y, left x, colour].
const G = '#1d7a1d', R = '#7a1414';
const levels = [[881,803,G],[887.5,816,G],[905.5,814,G],[912,814,G],[942.5,817,G],[973.3,798,G],[979.3,811,G],[985.3,816,G],[1010,817,G],[1022.5,817,G],[1034.5,814,G],[1065.6,638,G],[1071,816,G],[1083.5,814,G],
[1127,817,R],[1170,817,R],[1176,805,R],[1182,816,R],[1188,813,R],[1206.5,816,R],[1213,792,R],[1262,817,R],[1280.5,816,R],[1311,816,R],[1330,817,R],[1348,817,R],[1373,817,R],[1385.2,794.5,R],[1403.5,816,R],[1428.3,805,R],[1434.3,812,R],[1440.5,816,R],[1446.7,416,R],[1453,817,R],[1465,788.5,R],[1471,817,R],[1477,817,R],[1483,817,R],[1489,817,R],[1495.8,776,R],[1570,815,R]];
document.getElementById('levels').innerHTML = levels.map(([y, x, c]) => `<path d="M${x} ${y}H818" stroke="${c}" stroke-width="1.8"/>`).join('');
```
